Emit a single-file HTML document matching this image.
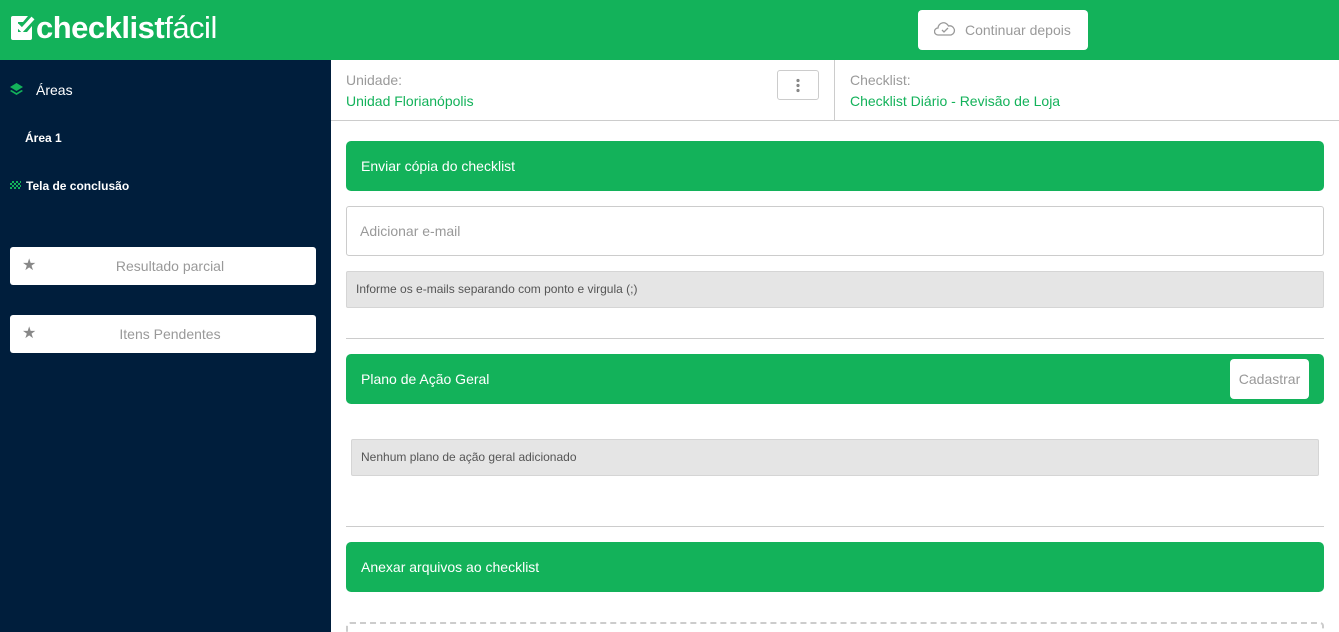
<!DOCTYPE html>
<html><head><meta charset="utf-8"><style>
*{box-sizing:border-box;margin:0;padding:0}
html,body{width:1339px;height:632px;overflow:hidden}
body{font-family:"Liberation Sans",sans-serif;background:#fff;position:relative}
.top{position:absolute;left:0;top:0;width:1339px;height:60px;background:#13b25a}
.logo{position:absolute;left:10px;top:10px;color:#fff;font-size:31px;line-height:36px;letter-spacing:-0.5px}
.logo b{font-weight:bold}
.cont{position:absolute;left:918px;top:10px;width:170px;height:40px;background:#fff;border-radius:4px;color:#9a9a9a;font-size:14px;line-height:40px;padding-left:47px}
.side{position:absolute;left:0;top:60px;width:331px;height:572px;background:#001e3c;color:#fff}
.sbtn{position:absolute;left:10px;width:306px;height:38px;background:#fff;border-radius:3px;color:#999;font-size:14px;line-height:38px;text-align:center;padding-left:14px}
.sbtn span{position:absolute;left:12px;top:0;color:#888;font-size:16px}
.hdr{position:absolute;left:331px;top:60px;width:1008px;height:61px;border-bottom:1px solid #ccc}
.lbl{color:#9a9a9a;font-size:14px}
.val{color:#13b25a;font-size:14px;margin-top:5px}
.bar{position:absolute;left:346px;width:978px;height:50px;background:#13b25a;border-radius:5px;color:#fff;font-size:14px;line-height:50px;padding-left:15px}
.gray{position:absolute;background:#e5e5e5;border:1px solid #d5d5d5;border-radius:2px;font-size:12px;color:#555}
.hr{position:absolute;left:346px;width:978px;height:1px;background:#ccc}
</style></head><body>
<div class="top">
<div class="logo"><svg width="26" height="26" viewBox="0 0 26 26" style="vertical-align:-3px"><path d="M3 1h15l-5 6H8v10h9l5-6v12a2 2 0 0 1-2 2H3a2 2 0 0 1-2-2V3a2 2 0 0 1 2-2z" fill="#fff"/><path d="M7 10l5 5L23 3" stroke="#fff" stroke-width="4" fill="none"/></svg><b>checklist</b>fácil</div>
<div class="cont"><svg style="position:absolute;left:16px;top:11px" width="22" height="16" viewBox="0 0 22 16"><path d="M5 14H4a3.5 3.5 0 0 1 0-7 5.5 5.5 0 0 1 10.5-2A4.5 4.5 0 0 1 17 14z" fill="none" stroke="#999" stroke-width="1.3"/><path d="M8 9l2 2 4-4" fill="none" stroke="#999" stroke-width="1.3"/></svg>Continuar depois</div>
</div>
<div class="side">
<svg style="position:absolute;left:10px;top:23px" width="13" height="14" viewBox="0 0 13 14"><path d="M6.5 0L13 4 6.5 8 0 4z" fill="#13b25a"/><path d="M0 8l6.5 4 6.5-4-1.5-1-5 3-5-3z" fill="#13b25a"/></svg>
<div style="position:absolute;left:36px;top:22px;font-size:14px">Áreas</div>
<div style="position:absolute;left:25px;top:71px;font-size:12px;font-weight:bold">Área 1</div>
<div style="position:absolute;left:10px;top:121px;width:11px;height:8px;background:repeating-conic-gradient(#13b25a 0 25%,#001e3c 0 50%) 0 0/4px 4px"></div>
<div style="position:absolute;left:26px;top:119px;font-size:12px;font-weight:bold">Tela de conclusão</div>
<div class="sbtn" style="top:187px"><span>★</span>Resultado parcial</div>
<div class="sbtn" style="top:255px"><span>★</span>Itens Pendentes</div>
</div>
<div class="hdr">
<div style="position:absolute;left:15px;top:12px"><div class="lbl">Unidade:</div><div class="val">Unidad Florianópolis</div></div>
<div style="position:absolute;left:446px;top:10px;width:42px;height:30px;border:1px solid #ccc;border-radius:3px"><div style="position:absolute;left:18px;top:7px;width:4px;height:15px;background:radial-gradient(circle,#888 1.6px,transparent 1.8px) 0 0/4px 5px"></div></div>
<div style="position:absolute;left:503px;top:0;width:1px;height:61px;background:#ccc"></div>
<div style="position:absolute;left:519px;top:12px"><div class="lbl">Checklist:</div><div class="val">Checklist Diário - Revisão de Loja</div></div>
</div>
<div class="bar" style="top:141px">Enviar cópia do checklist</div>
<div style="position:absolute;left:346px;top:206px;width:978px;height:50px;border:1px solid #ccc;border-radius:3px;color:#999;font-size:14px;line-height:48px;padding-left:13px">Adicionar e-mail</div>
<div class="gray" style="left:346px;top:271px;width:978px;height:37px;line-height:35px;padding-left:9px">Informe os e-mails separando com ponto e virgula (;)</div>
<div class="hr" style="top:338px"></div>
<div class="bar" style="top:354px">Plano de Ação Geral<div style="position:absolute;right:15px;top:5px;width:79px;height:40px;background:#fff;border-radius:4px;color:#999;line-height:40px;text-align:center">Cadastrar</div></div>
<div class="gray" style="left:351px;top:439px;width:968px;height:37px;line-height:35px;padding-left:9px">Nenhum plano de ação geral adicionado</div>
<div class="hr" style="top:526px"></div>
<div class="bar" style="top:542px">Anexar arquivos ao checklist</div>
<div style="position:absolute;left:346px;top:622px;width:978px;height:30px;border:2px dashed #ccc;border-radius:4px"></div>
</body></html>
